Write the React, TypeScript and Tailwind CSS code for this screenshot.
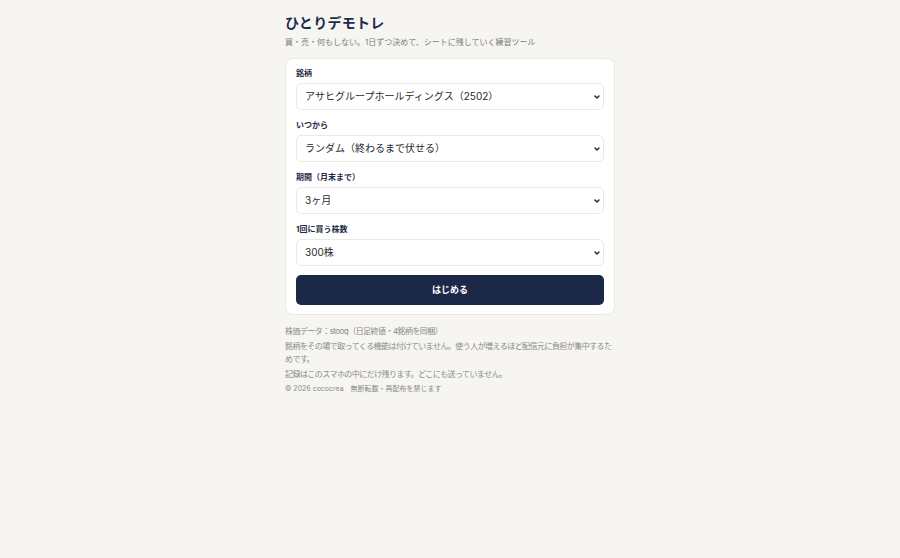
import React, { useState } from "react";

const font = "font-['Inter','Noto_Sans_CJK_JP',sans-serif]";

const fields = [
  {
    label: "銘柄",
    options: ["アサヒグループホールディングス（2502）", "トヨタ自動車（7203）", "ソニーグループ（6758）", "任天堂（7974）"],
  },
  { label: "いつから", options: ["ランダム（終わるまで伏せる）", "1年前から", "2年前から"] },
  { label: "期間（月末まで）", options: ["3ヶ月", "1ヶ月", "6ヶ月", "12ヶ月"] },
  { label: "1回に買う株数", options: ["300株", "100株", "200株", "500株"] },
];

function Chevron() {
  return (
    <svg
      className="pointer-events-none absolute right-[3px] top-1/2 -translate-y-1/2"
      width="8"
      height="8"
      viewBox="0 0 10 10"
      fill="none"
      stroke="#1f2937"
      strokeWidth="1.8"
      strokeLinecap="round"
      strokeLinejoin="round"
    >
      <path d="M2.5 3.8 5 6.3 7.5 3.8" />
    </svg>
  );
}

function Field({ label, options }: { label: string; options: string[] }) {
  const [value, setValue] = useState(options[0]);
  return (
    <div className="flex flex-col gap-[4px]">
      <label className="block text-[8px] leading-[11px] font-bold text-[#1e2a47]">{label}</label>
      <div className="relative h-[27px]">
        <select
          value={value}
          onChange={(e) => setValue(e.target.value)}
          className={`${font} block appearance-none w-full h-[27px] pl-[8px] pr-5 rounded-[5px] border border-[#eceae6] bg-white text-[10px] text-[#2a2a2a] outline-none`}
        >
          {options.map((o) => (
            <option key={o}>{o}</option>
          ))}
        </select>
        <Chevron />
      </div>
    </div>
  );
}

export default function App() {
  return (
    <div className={`${font} min-h-[558px] bg-[#f6f5f2]`}>
      <div className="w-[330px] mx-auto pt-[14px]">
        <h1 className="text-[14px] leading-[18px] font-bold text-[#1e2a4a] tracking-[0.02em]">ひとりデモトレ</h1>
        <p className="mt-[5px] text-[8px] leading-[11px] text-[#7b7b7b]">
          買・売・何もしない。1日ずつ決めて、シートに残していく練習ツール
        </p>

        <div className="mt-[10px] bg-white border border-[#ebe9e5] rounded-[8px] px-[10px] pt-[9px] pb-[9px] flex flex-col gap-[10px]">
          {fields.map((f) => (
            <Field key={f.label} label={f.label} options={f.options} />
          ))}
          <button className="mt-[-1px] h-[30px] w-full rounded-[5px] bg-[#1b2848] text-white text-[9px] font-bold">
            はじめる
          </button>
        </div>

        <div className="mt-[10px] text-[8px] leading-[13.5px] tracking-[-0.55px] text-[#8a8a8a] flex flex-col gap-[1px]">
          <p>株価データ：stooq（日足終値・4銘柄を同梱）</p>
          <p>
            銘柄をその場で取ってくる機能は付けていません。使う人が増えるほど配信元に負担が集中するためです。
          </p>
          <p>記録はこのスマホの中にだけ残ります。どこにも送っていません。</p>
          <p className="text-[7px] tracking-normal">© 2026 cococrea　無断転載・再配布を禁じます</p>
        </div>
      </div>
    </div>
  );
}
